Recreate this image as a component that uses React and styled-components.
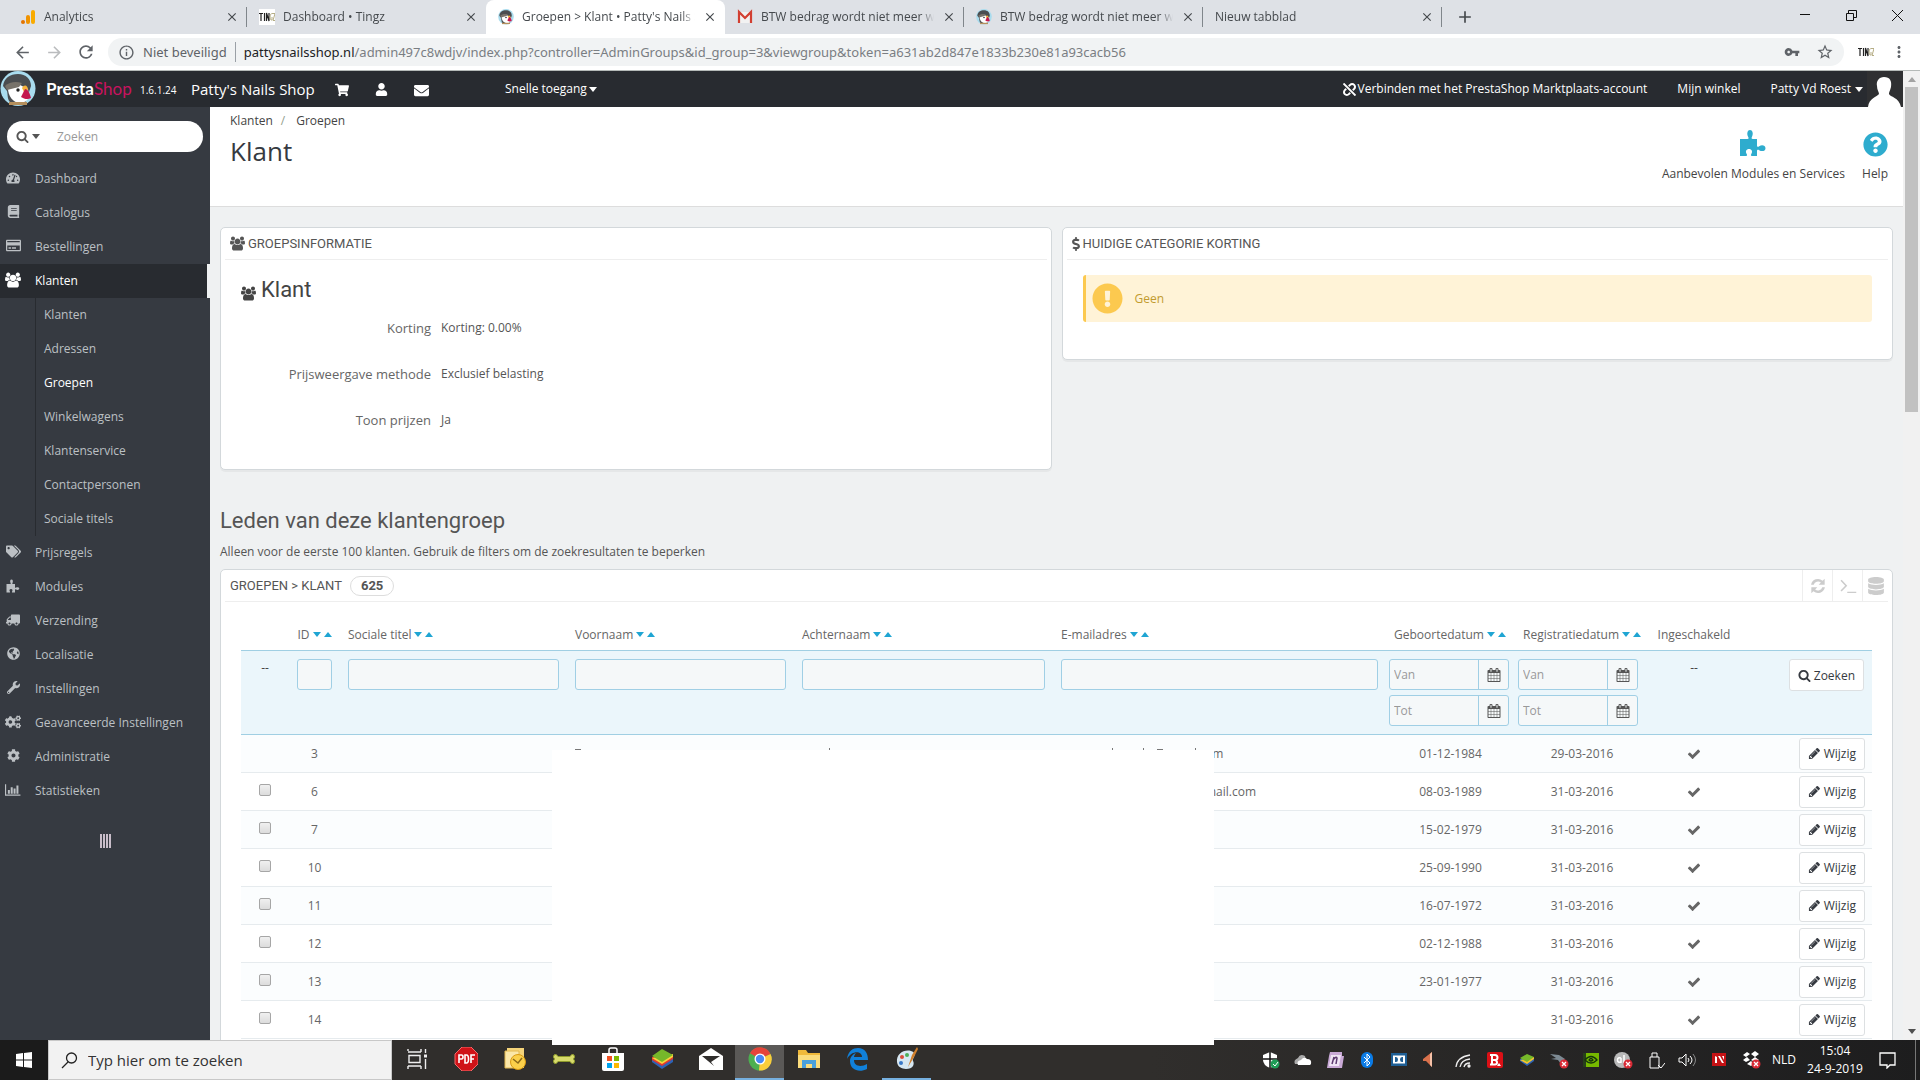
import React from 'react';
import styled, { createGlobalStyle, css } from 'styled-components';
import {
  FaTachometerAlt,
  FaBook,
  FaRegCreditCard,
  FaTags,
  FaTruck,
  FaGlobeAmericas,
  FaWrench,
  FaCogs,
  FaCog,
  FaShoppingCart,
  FaUser,
  FaEnvelope,
  FaDatabase,
  FaQuestionCircle,
  FaExclamationCircle,
  FaDollarSign,
  FaUnlink,
} from 'react-icons/fa';
import {
  MdArrowBack,
  MdArrowForward,
  MdRefresh,
  MdStarBorder,
  MdVpnKey,
  MdInfoOutline,
  MdMoreVert,
  MdAdd,
  MdClose,
} from 'react-icons/md';

const GlobalStyle = createGlobalStyle`
  * { box-sizing: border-box; }
  body {
    margin: 0;
    overflow: hidden;
    font-family: 'Open Sans', sans-serif;
    font-size: 12px;
    line-height: 18px;
    color: #555;
  }
  button, input { font-family: inherit; font-size: inherit; }
  a { color: inherit; text-decoration: none; }
  h1, h2, h3, p, ul { margin: 0; padding: 0; font-weight: 400; }
  ul { list-style: none; }
  svg { display: block; flex: none; }
`;

const headingFont = css`
  font-family: 'Ubuntu Condensed', Roboto, sans-serif;
`;

/* ---------- icons ---------- */

const glyphs = {
  users: ['0 0 1920 1792', 'M593 896q-162 5-265 128h-134q-82 0-138-40.5t-56-118.5q0-353 124-353 6 0 43.5 21t97.5 42.5 119 21.5q67 0 133-23-5 37-5 66 0 139 81 256zm1071 637q0 120-73 189.5t-194 69.5h-874q-121 0-194-69.5t-73-189.5q0-53 3.5-103.5t14-109 26.5-108.5 43-97.5 62-81 85.5-53.5 111.5-20q10 0 43 21.5t73 48 107 48 135 21.5 135-21.5 107-48 73-48 43-21.5q61 0 111.5 20t85.5 53.5 62 81 43 97.5 26.5 108.5 14 109 3.5 103.5zm-1024-1277q0 106-75 181t-181 75-181-75-75-181 75-181 181-75 181 75 75 181zm704 384q0 159-112.5 271.5t-271.5 112.5-271.5-112.5-112.5-271.5 112.5-271.5 271.5-112.5 271.5 112.5 112.5 271.5zm576 225q0 78-56 118.5t-138 40.5h-134q-103-123-265-128 81-117 81-256 0-29-5-66 66 23 133 23 59 0 119-21.5t97.5-42.5 43.5-21q124 0 124 353zm-128-609q0 106-75 181t-181 75-181-75-75-181 75-181 181-75 181 75 75 181z'],
  check: ['0 0 1792 1792', 'M1671 566q0 40-28 68l-724 724-136 136q-28 28-68 28t-68-28l-136-136-362-362q-28-28-28-68t28-68l136-136q28-28 68-28t68 28l294 295 656-657q28-28 68-28t68 28l136 136q28 28 28 68z'],
  search: ['0 0 1792 1792', 'M1216 832q0-185-131.5-316.5t-316.5-131.5-316.5 131.5-131.5 316.5 131.5 316.5 316.5 131.5 316.5-131.5 131.5-316.5zm512 832q0 52-38 90t-90 38q-54 0-90-38l-343-342q-179 124-399 124-143 0-273.5-55.5t-225-150-150-225-55.5-273.5 55.5-273.5 150-225 225-150 273.5-55.5 273.5 55.5 225 150 150 225 55.5 273.5q0 220-124 399l343 343q37 37 37 90z'],
  pencil: ['0 0 1792 1792', 'M491 1536l91-91-235-235-91 91v107h128v128h107zm523-928q0-22-22-22-10 0-17 7l-542 542q-7 7-7 17 0 22 22 22 10 0 17-7l542-542q7-7 7-17zm-54-192l416 416-832 832h-416v-416zm683 96q0 53-37 90l-166 166-416-416 166-165q36-38 90-38 53 0 91 38l235 234q37 39 37 91z'],
  calendar: ['0 0 1792 1792', 'M192 1664h288v-288h-288v288zm352 0h320v-288h-320v288zm-352-352h288v-320h-288v320zm352 0h320v-320h-320v320zm-352-384h288v-288h-288v288zm736 736h320v-288h-320v288zm-384-736h320v-288h-320v288zm768 736h288v-288h-288v288zm-384-352h320v-320h-320v320zm-352-864v-288q0-13-9.5-22.5t-22.5-9.5h-64q-13 0-22.5 9.5t-9.5 22.5v288q0 13 9.5 22.5t22.5 9.5h64q13 0 22.5-9.5t9.5-22.5zm736 864h288v-320h-288v320zm-384-384h320v-288h-320v288zm384 0h288v-288h-288v288zm32-480v-288q0-13-9.5-22.5t-22.5-9.5h-64q-13 0-22.5 9.5t-9.5 22.5v288q0 13 9.5 22.5t22.5 9.5h64q13 0 22.5-9.5t9.5-22.5zm384-64v1280q0 52-38 90t-90 38h-1408q-52 0-90-38t-38-90v-1280q0-52 38-90t90-38h128v-96q0-66 47-113t113-47h64q66 0 113 47t47 113v96h384v-96q0-66 47-113t113-47h64q66 0 113 47t47 113v96h128q52 0 90 38t38 90z'],
  puzzle: ['0 0 28 28', 'M1 10h7.500c1.500 0 1.200-1.200.6-2.200C7.500 4.500 8.500 1 11 1s3.700 3.500 2 6.800c-.6 1-.7 2.200.8 2.200H18v6.500c0 1.600 1.200 1.400 2.200.7 2.800-1.800 6.300-.8 6.300 2s-3.500 3.800-6.300 2c-1-.7-2.200-.7-2.200.8v5h-5c-1.300 0-1.300-1-.7-2 1.600-2.500.4-5-2.300-5s-3.900 2.500-2.300 5c.6 1 .6 2-.7 2H1z'],
  chart: ['0 0 28 24', 'M2 2v18h25v2H0V2zM5 12h3.500v6.500H5zM10 7h3.500v11.500H10zM15 9.500h3.500v9H15zM20 4h3.500v14.500H20z'],
  refresh: ['0 0 24 24', 'M22 1v9h-9l3.300-3.300A6.800 6.800 0 0 0 5.600 10H1.600A10.500 10.500 0 0 1 18.900 4.100zM2 23v-9h9l-3.300 3.300A6.800 6.800 0 0 0 18.400 14h4A10.500 10.500 0 0 1 5.100 19.900z'],
  terminal: ['0 0 24 24', 'M2 5l1.500-1.300 7.500 7.800-7.500 7.800L2 18l6.200-6.500zM11 19.500h12v1.800H11z'],
};

const Glyph = ({ name, size = 14 }) => (
  <svg width={size} height={size} viewBox={glyphs[name][0]} fill="currentColor" aria-hidden="true">
    <path d={glyphs[name][1]} />
  </svg>
);

const Dollar = styled(FaDollarSign)`
  width: 8px;
  height: 14px;
`;

const Caret = ({ up, size = 8 }) => (
  <svg width={size} height="5" viewBox="0 0 8 5" preserveAspectRatio="none" fill="currentColor" aria-hidden="true">
    <path d={up ? 'M0 5h8L4 0z' : 'M0 0h8L4 5z'} />
  </svg>
);

const Puffin = ({ size }) => (
  <svg width={size} height={size} viewBox="0 0 36 36" aria-hidden="true">
    <ellipse cx="18" cy="17.500" rx="17.500" ry="17.500" fill="#a9dcee" />
    <path d="M3 15C4 7 10 3 18 3s13 5 13 12l-2 6-4 11H11C7 29 8 24 7 20z" fill="#4a4d50" />
    <path d="M8 17c3-3 8-3 12-3l8 4 1 8c-2 4-5 6-9 6-7 0-12-7-12-15z" fill="#fff" />
    <path d="M5 15c4-4 11-5 17-3l-3 4-12 3z" fill="#77726a" />
    <circle cx="18" cy="19" r="1.700" fill="#222" />
    <path d="M22 17c2-4 6-3 6 2l-3 4z" fill="#f6b23c" />
    <path d="M25 18c3 0 5 5 6 9-3 2-7 1-10-1z" fill="#c4184f" />
    <path d="M9 31h18v3H9z" fill="#b58f5c" />
  </svg>
);

const AnalyticsIcon = () => (
  <svg width="16" height="16" viewBox="0 0 16 16" aria-hidden="true">
    <rect x="11" y="1" width="4" height="14" rx="2" fill="#f9ab00" />
    <rect x="6" y="6" width="4" height="9" rx="2" fill="#f09300" />
    <circle cx="3" cy="13" r="2" fill="#e37400" />
  </svg>
);

const TingzIcon = ({ plain }) => (
  <svg width="16" height="16" viewBox="0 0 16 16" aria-hidden="true">
    {!plain && <rect width="16" height="16" fill="#fff" />}
    <path d="M0 4.500h4M2 4v8M5.500 4v8M7.500 12V4l2.500 8V4" stroke="#222" strokeWidth="1.200" fill="none" />
    <path d="M13 5c-2-2-3 7 0 6V8M13 4.500h3l-2 7h2" stroke="#b5ad85" strokeWidth="1" fill="none" />
  </svg>
);

const GmailIcon = () => (
  <svg width="16" height="16" viewBox="0 0 16 16" aria-hidden="true">
    <path d="M2 3h12v11H2z" fill="#f2f2f2" />
    <path d="M2 14V3l6 6 6-6v11" stroke="#d23f31" strokeWidth="2.200" fill="none" />
  </svg>
);

/* ---------- browser ---------- */

const Screen = styled.div`
  position: relative;
  height: 100vh;
  display: flex;
  flex-direction: column;
  overflow: hidden;
  background: #eff1f2;
`;

const TabStrip = styled.div`
  flex: none;
  display: flex;
  height: 34px;
  padding-left: 8px;
  background: #dee1e6;
  font-size: 12px;
  color: #45494d;
`;

const Tab = styled.div`
  display: flex;
  align-items: center;
  width: 239px;
  gap: 8px;
  padding: 0 8px 0 12px;
  background: ${(p) => (p.$active ? '#fff' : 'transparent')};
  border-radius: 8px 8px 0 0;
`;

const TabTitle = styled.span`
  flex: 1;
  overflow: hidden;
  white-space: nowrap;
  mask-image: linear-gradient(to right, #000 92%, transparent);
`;

const TabEdge = styled.i`
  width: 1px;
  height: 20px;
  margin: 7px 0 7px -1px;
  background: ${(p) => (p.$hidden ? 'transparent' : '#80868b')};
`;

const PlainButton = styled.button`
  display: flex;
  align-items: center;
  justify-content: center;
  padding: 0;
  border: 0;
  background: none;
  color: inherit;
`;

const NewTab = styled(PlainButton)`
  width: 46px;
`;

const WindowButtons = styled.div`
  display: flex;
  align-items: center;
  height: 30px;
  margin-left: auto;
  color: #111;
`;

const WindowButton = styled(PlainButton)`
  width: 46px;
`;

const Toolbar = styled.div`
  flex: none;
  display: flex;
  align-items: center;
  height: 37px;
  padding: 0 12px;
  background: #fff;
  border-bottom: 1px solid #b5bab8;
  color: #5f6368;
`;

const NavButton = styled(PlainButton)`
  width: 32px;
  margin-left: ${(p) => (p.$first ? '-6px' : '0')};
  color: ${(p) => (p.$dim ? '#babcbe' : '#5f6368')};
`;

const AddressBar = styled.div`
  flex: 1;
  display: flex;
  align-items: center;
  gap: 8px;
  height: 28px;
  margin: 0 14px 0 6px;
  padding: 0 10px;
  border-radius: 14px;
  background: #f1f3f4;
  font-family: 'Noto Sans', sans-serif;
  font-size: 13px;
  line-height: 20px;
  white-space: nowrap;
`;

const UrlEdge = styled.i`
  width: 1px;
  height: 20px;
  background: #9aa0a6;
`;

const Url = styled.span`
  flex: 1;
  color: #7a7e83;
  b { font-weight: 400; color: #202124; }
`;

const UrlTools = styled.div`
  display: flex;
  align-items: center;
  gap: 16px;
`;

const ProfileTools = styled.div`
  display: flex;
  align-items: center;
  gap: 16px;
`;

/* ---------- back office ---------- */

const Viewport = styled.div`
  flex: 1;
  min-height: 0;
  display: flex;
`;

const Shop = styled.div`
  flex: 1;
  min-width: 0;
  display: flex;
  flex-direction: column;
  overflow: hidden;
`;

const TopBar = styled.header`
  flex: none;
  display: flex;
  align-items: center;
  height: 36px;
  background: #282b30;
  color: #fff;
  font-size: 12px;
  white-space: nowrap;
`;

const Brand = styled.a`
  display: flex;
  align-items: center;
  gap: 10px;
  width: 140px;
  font-family: 'Lato', sans-serif;
  font-size: 17px;
  font-weight: 700;
  em { font-style: normal; font-weight: 400; color: #c8135f; }
`;

const Version = styled.span`
  width: 51px;
  padding-top: 2px;
  font-size: 10px;
`;

const ShopName = styled.a`
  width: 144px;
  font-size: 15px;
`;

const TopIcons = styled.nav`
  display: flex;
  gap: 26px;
  width: 170px;
  padding-top: 2px;
`;

const TopLink = styled.a`
  display: flex;
  align-items: center;
  gap: 2px;
`;

const TopRight = styled.div`
  display: flex;
  align-items: center;
  gap: 30px;
  margin-left: auto;
`;

const Account = styled.a`
  display: flex;
  align-items: center;
  gap: 4px;
`;

const Columns = styled.div`
  flex: 1;
  min-height: 0;
  display: flex;
`;

const Sidebar = styled.aside`
  flex: none;
  width: 210px;
  padding-top: 14px;
  background: #363a41;
  color: #bcc0c4;
`;

const SideSearch = styled.form`
  display: flex;
  align-items: center;
  height: 31px;
  margin: 0 7px 10px;
  padding: 0 9px;
  gap: 3px;
  border-radius: 16px;
  background: #fff;
  color: #555;
  input {
    min-width: 0;
    flex: 1;
    margin-left: 14px;
    padding: 0;
    border: 0;
    outline: 0;
    background: none;
    &::placeholder { color: #999; }
  }
`;

const MenuLink = styled.a`
  display: grid;
  grid-template-columns: 28px 1fr;
  align-items: center;
  height: 34px;
  padding-left: 7px;
  color: ${(p) => (p.$active ? '#fff' : 'inherit')};
  background: ${(p) => (p.$active ? '#282b30' : 'none')};
  border-right: ${(p) => (p.$active ? '3px solid #eff1f2' : '0')};
`;

const MenuIcon = styled.span`
  display: flex;
  justify-content: center;
  width: 12px;
  padding-bottom: 3px;
  transform: ${(p) => (p.$flip ? 'scaleX(-1)' : 'none')};
`;

const SubMenu = styled.ul`
  margin-left: 35px;
  border-left: 1px solid #282b30;
`;

const SubLink = styled.a`
  display: flex;
  align-items: center;
  height: 34px;
  padding-left: 8px;
  color: ${(p) => (p.$active ? '#fff' : 'inherit')};
`;

const Collapse = styled(PlainButton)`
  gap: 1px;
  margin: 26px auto 0;
  i { width: 2px; height: 14px; background: #c9bdc9; }
`;

const Content = styled.main`
  flex: 1;
  min-width: 0;
  overflow: hidden;
`;

const PageHead = styled.div`
  display: flex;
  justify-content: space-between;
  height: 100px;
  padding: 5px 15px 0 20px;
  background: #fff;
  border-bottom: 1px solid #ddd;
`;

const Crumbs = styled.nav`
  display: flex;
  gap: 8px;
  color: #444;
  a + a::before { content: '/'; margin-right: 11px; color: #93a08c; }
`;

const PageTitle = styled.h1`
  margin-top: 3px;
  font-size: 26px;
  line-height: 36px;
  color: #363a41;
`;

const HeadTools = styled.div`
  display: flex;
  gap: 17px;
  padding-top: 18px;
`;

const HeadTool = styled.a`
  display: flex;
  flex-direction: column;
  align-items: center;
  justify-content: flex-end;
  gap: 8px;
  height: 53px;
  color: #444;
  svg { color: #2eacce; }
`;

const Sections = styled.div`
  padding: 20px 10px;
`;

const TopPanels = styled.div`
  display: grid;
  grid-template-columns: 1fr 1fr;
  gap: 10px;
  align-items: start;
`;

const Panel = styled.section`
  padding: 0 20px ${(p) => p.$bottom}px;
  border: 1px solid #d3d8db;
  border-radius: 5px;
  background: #fff;
  box-shadow: 0 2px 0 rgba(0, 0, 0, 0.04);
`;

const PanelHead = styled.div`
  display: flex;
  align-items: center;
  gap: 3px;
  height: 32px;
  margin: 0 -16px;
  padding-left: 5px;
  border-bottom: 1px solid #eee;
  ${headingFont}
  font-size: 13px;
  color: #555;
`;

const GroupName = styled.h3`
  display: flex;
  align-items: center;
  gap: 5px;
  height: 28px;
  margin: 16px 0 1px;
  ${headingFont}
  font-size: 22px;
  color: #444;
  svg { margin-top: 7px; }
`;

const InfoRow = styled.div`
  display: grid;
  grid-template-columns: 190px 1fr;
  align-items: center;
  gap: 10px;
  height: 46px;
  dt { text-align: right; font-size: 13px; color: #666; }
  dd { margin: 0; }
`;

const InfoList = styled.dl`
  margin: 0;
`;

const Warning = styled.div`
  display: flex;
  align-items: center;
  gap: 12px;
  height: 47px;
  margin-top: 15px;
  padding-left: 6px;
  border-left: 3px solid #fcc94f;
  border-radius: 3px;
  background: #fff3d7;
  color: #c29b2f;
  svg { color: #fcc94f; }
`;

const MembersTitle = styled.h2`
  margin: 36px 0 7px;
  ${headingFont}
  font-size: 22px;
  line-height: 30px;
  color: #555;
`;

const MembersNote = styled.p`
  margin-bottom: 8px;
`;

const Badge = styled.span`
  margin-left: 5px;
  padding: 0 10px;
  border: 1px solid #ddd;
  border-radius: 10px;
  font-weight: 700;
  line-height: 18px;
`;

const PanelActions = styled.div`
  display: flex;
  align-self: stretch;
  margin-left: auto;
`;

const PanelAction = styled(PlainButton)`
  width: 30px;
  border-left: 1px solid #eee;
  color: #ccc;
  &:last-child { width: 26px; }
`;

/* ---------- table ---------- */

const Table = styled.table`
  width: 100%;
  margin-top: 17px;
  table-layout: fixed;
  border-collapse: separate;
  border-spacing: 0;
  color: #666;
`;

const Head = styled.th`
  height: 31px;
  padding: 0 8px;
  font-weight: 400;
  text-align: ${(p) => p.$align || 'left'};
  white-space: nowrap;
`;

const Sort = styled.span`
  display: flex;
  align-items: center;
  justify-content: ${(p) => (p.$align === 'center' ? 'center' : 'flex-start')};
  gap: 3px;
  svg { color: #1fa5d3; }
`;

const FilterCell = styled.td`
  height: 85px;
  padding: 8px ${(p) => (p.$date ? 3 : 8)}px 0;
  vertical-align: top;
  text-align: ${(p) => p.$align || 'left'};
  background: #ebf6fb;
  border-top: 1px solid #a0cfe3;
  border-bottom: 1px solid #a0cfe3;
  color: #444;
`;

const fieldBox = css`
  height: 31px;
  border: 1px solid #a0cfe5;
  border-radius: 3px;
  background: #f5f8f9;
`;

const FilterInput = styled.input`
  ${fieldBox}
  display: block;
  width: 100%;
  padding: 0 8px;
`;

const DateField = styled.label`
  ${fieldBox}
  display: flex;
  width: 120px;
  margin-bottom: 5px;
  input {
    min-width: 0;
    flex: 1;
    padding: 0 4px;
    border: 0;
    border-right: 1px solid #a0cfe5;
    background: none;
    &::placeholder { color: #999; }
  }
`;

const DateIcon = styled.span`
  display: flex;
  align-items: center;
  justify-content: center;
  width: 29px;
  color: #555;
`;

const Button = styled.button`
  display: inline-flex;
  align-items: center;
  gap: 3px;
  height: 32px;
  padding: 0 8px;
  border: 1px solid #dde0e2;
  border-radius: 3px;
  background: #fff;
  color: #363a41;
  vertical-align: middle;
`;

const Row = styled.tr`
  background: ${(p) => (p.$odd ? '#fbfdfe' : '#fff')};
`;

const Cell = styled.td`
  height: 38px;
  padding: 0 ${(p) => (p.$tail ? 7 : 8)}px;
  border-bottom: 1px solid #e6ebee;
  text-align: ${(p) => p.$align || 'left'};
  svg { margin: 0 auto; }
`;

const EmailCell = styled(Cell)`
  padding-left: 152px;
`;

const Check = styled.input`
  appearance: none;
  display: block;
  width: 12px;
  height: 12px;
  margin: 0 auto 4px;
  border: 1px solid #a6a6a6;
  border-radius: 2px;
  background: linear-gradient(#f0f0f0, #dcdcdc);
`;

/* white patch over the private columns */
const Redaction = styled.div`
  position: absolute;
  z-index: 2;
  left: 552px;
  top: 750px;
  width: 662px;
  height: 295px;
  background: #fff;
`;

const Leftovers = styled.svg`
  position: absolute;
  left: 0;
  top: -2px;
`;

const ScrollTrack = styled.div`
  flex: none;
  display: flex;
  flex-direction: column;
  align-items: center;
  justify-content: space-between;
  width: 17px;
  padding: 6px 0;
  background: #f1f1f1;
  color: #505050;
  svg:first-child { color: #a3a3a3; }
`;

const ScrollThumb = styled.i`
  width: 13px;
  height: 325px;
  margin: 5px 0 auto;
  background: #c1c1c1;
`;

/* ---------- taskbar ---------- */

const Taskbar = styled.footer`
  flex: none;
  display: flex;
  height: 40px;
  background: linear-gradient(to right, #302e2c 60%, #1d1d1e);
  color: #fff;
`;

const StartButton = styled(PlainButton)`
  width: 48px;
  background: #1b1b1b;
`;

const TaskSearch = styled.label`
  display: flex;
  align-items: center;
  gap: 10px;
  width: 344px;
  padding-left: 12px;
  border: 1px solid #c8c8c8;
  background: #f2f2f2;
  color: #222;
  input {
    flex: 1;
    padding: 0;
    border: 0;
    background: none;
    font-size: 15px;
    &::placeholder { color: #333; }
  }
`;

const TaskApp = styled(PlainButton)`
  width: 49px;
  border-bottom: 2px solid ${(p) => (p.$open ? '#76b0e0' : 'transparent')};
  background: ${(p) => (p.$active ? '#5b5957' : 'none')};
`;

const Tray = styled.div`
  display: flex;
  align-items: center;
  margin-left: auto;
`;

const TrayButton = styled(PlainButton)`
  width: 32px;
  height: 40px;
`;

const Language = styled.span`
  width: 34px;
  text-align: center;
`;

const Clock = styled.time`
  width: 68px;
  text-align: center;
  line-height: 18px;
`;

const Notice = styled(PlainButton)`
  width: 37px;
  height: 40px;
`;

const ShowDesktop = styled.i`
  width: 5px;
  height: 40px;
  margin-left: 9px;
  border-left: 1px solid #777;
`;

const apps = [
  { name: 'Taakweergave', art: <g fill="none" stroke="#eee" strokeWidth="1.400"><path d="M3 5h13M3 4V2M16 2v3M3 19v3M16 19v3M3 19h13M4 8.500h11v7H4zM20.500 2v4M20.500 12v10" /><path d="M19 9h3" strokeWidth="3" /></g> },
  { name: 'PDF', art: <g><path d="M8 0h9l7 7v10l-7 7H8l-7-7V7z" fill="#cf1318" stroke="#f26a6a" /><path d="M5 16V8h2.500q1.500 0 1.500 2t-1.500 2H5M11 8v8h1.500q2 0 2-4t-2-4zM17 16V8h4M17 12h3" stroke="#fff" strokeWidth="1.600" fill="none" /></g> },
  { name: 'Outlook', art: <g><path d="M4 1h17v20H4z" fill="#f5d47a" /><path d="M2 4h14v17H2z" fill="#fbe7a8" stroke="#e3b94e" /><circle cx="15" cy="15" r="7.500" fill="#fbd04a" stroke="#d99a12" /><path d="M10 12l5 4 4-5" stroke="#8c6a1a" strokeWidth="1.500" fill="none" /></g> },
  { name: 'Bot', art: <path d="M2 8q2-2 4 1.500h12q2-3.500 4-1.500 1.500 2-.5 4 2 2 .5 4-2 2-4-1.500H6q-2 3.500-4 1.500-1.500-2 .5-4-2-2-.5-4z" fill="#d8db6b" stroke="#8f9a2c" /> },
  { name: 'Store', art: <g><path d="M8 6V3q0-2 2-2h4q2 0 2 2v3" stroke="#fff" strokeWidth="1.500" fill="none" /><path d="M1 6h22v16q0 2-2 2H3q-2 0-2-2z" fill="#fff" /><path d="M6 9h5v5H6z" fill="#f25022" /><path d="M13 9h5v5h-5z" fill="#7fba00" /><path d="M6 16h5v5H6z" fill="#00a4ef" /><path d="M13 16h5v5h-5z" fill="#ffb900" /></g> },
  { name: 'BlueStacks', art: <g><path d="M2 15l10 7 11-7v-4L2 12z" fill="#2d62b5" /><path d="M2 13l10 6 11-7V9L2 10z" fill="#e23a2e" /><path d="M2 11l10 6 11-7V7z" fill="#f8d33a" /><path d="M2 9l10-7 11 6-11 7z" fill="#76b82a" /></g> },
  { name: 'Mail', art: <g><path d="M0 9l12-8 12 8v14H0z" fill="#fff" /><path d="M3 9h18l-9 6 3 4-6-5z" fill="#302e2c" /></g> },
  { name: 'Chrome', active: true, open: true, art: <g><circle cx="12" cy="12" r="11.500" fill="#4caf50" /><path d="M12 12L2 6.300A11.500 11.500 0 0 1 22.500 7z" fill="#e5443a" /><path d="M12 12l10.500-5A11.500 11.500 0 0 1 11 23.500z" fill="#fccd3c" /><circle cx="12" cy="12" r="5.500" fill="#fff" /><circle cx="12" cy="12" r="4.200" fill="#4a8af4" /></g> },
  { name: 'Verkenner', art: <g><path d="M1 3h8l2 3h12v15H1z" fill="#f0b93a" /><path d="M1 8h22v13H1z" fill="#fbdc7c" /><path d="M5 21v-8h14v8h-4v-4H9v4z" fill="#4aa0dc" /></g> },
  { name: 'Edge', art: <path d="M1 12C2 4 7 1 12 1c7 0 10 5 10 12H8c0 7 8 7 13 4v5c-8 4-17 1-17-8 0-4 3-7 6-8-1 1-2 3-2 4h8c0-6-10-7-15 2z" fill="#1181da" /> },
  { name: 'Paint', open: true, art: <g><path d="M2 15C1 7 9 2 16 4c6 2 3 6 2 8s2 3 0 7-15 5-16-4z" fill="#d6e7f2" /><circle cx="7" cy="10" r="2" fill="#d94c3a" /><circle cx="12" cy="8" r="2" fill="#4cae5a" /><circle cx="6" cy="16" r="2" fill="#3878c8" /><path d="M22 0l-5 8-4 12 6-10 4-8z" fill="#cf7f2c" /></g> },
];

const redCross = <g><circle cx="15" cy="14" r="4.500" fill="#d92a35" /><path d="M13 12l4 4M17 12l-4 4" stroke="#fff" strokeWidth="1.300" /></g>;

const tray = [
  { name: 'Beveiliging', art: <g><path d="M9 2l7 3v5q0 5-7 8-7-3-7-8V5z" fill="#fff" /><path d="M9 2v16M2 9h14" stroke="#111" strokeWidth="1.500" /><circle cx="14" cy="14" r="4.500" fill="#1f9d57" /><path d="M12 14l2 2 3-4" stroke="#fff" fill="none" /></g> },
  { name: 'OneDrive', art: <g><path d="M2 14q-2-4 3-6 2-5 7-2l2 8z" fill="#aaa" /><path d="M5 15q-2-4 3-5 3-4 6-1 5 0 4 5l-1 1z" fill="#fff" /></g> },
  { name: 'Notities', art: <g><path d="M5 2h12v4h2l-2 12H2L4 6z" fill="#c9a9d6" /><path d="M6 5h10l-2 11H4z" fill="#efe4f4" /><path d="M7 14l2-7M8 10q3-4 4-2l-1 6" stroke="#5d3a70" strokeWidth="1.500" fill="none" /></g> },
  { name: 'Bluetooth', art: <g><rect x="4" y="2" width="12" height="16" rx="6" fill="#0a7be6" /><path d="M7 7l6 6-3 3V4l3 3-6 6" stroke="#fff" fill="none" /></g> },
  { name: 'Grafisch', art: <g><path d="M2 3h16v13H2z" fill="#1f5f95" /><path d="M4 5.500h12v8H4z" fill="#fff" /><path d="M6 7h1q2 0 2 2.500T7 12H6zM14 7h-1q-2 0-2 2.500t2 2.500h1z" fill="#1f5f95" /></g> },
  { name: 'Audio', art: <g><path d="M2 9l9-7v15l-6-6H2z" fill="#d9714c" /><path d="M9 4l2-2v15l-2-2z" fill="#f5c1a8" /></g> },
  { name: 'Netwerk', art: <g fill="none" stroke="#eee" strokeWidth="1.300"><path d="M3 17Q4 7 17 5M7 17q1-7 10-8M11 17q1-4 6-4" /><circle cx="16" cy="16" r="1" fill="#fff" /></g> },
  { name: 'Bitdefender', art: <g><rect x="2" y="2" width="16" height="16" rx="2" fill="#dc1016" /><path d="M5 5h5q2.500 0 2.500 2.500T10 10H7M7 5v10M5 14.500h5q2 0 2-2T10 10" stroke="#fff" strokeWidth="2" fill="none" /><path d="M12 16l2-3 2 3z" fill="#fff" /></g> },
  { name: 'BlueStacks', art: <g><path d="M3 11l7 5 7-5v-2H3z" fill="#2d62b5" /><path d="M3 10l7 4 7-5V7z" fill="#f3c12f" /><path d="M3 8l7-4 7 3-7 5z" fill="#76b82a" /></g> },
  { name: 'Hardware', art: <g><path d="M1 4l9 1 6 4-4 5-3-4-7-1 5-1z" fill="#7d8a93" />{redCross}</g> },
  { name: 'Nvidia', art: <g><path d="M2 3h16v14H2z" fill="#76b900" /><path d="M2 3h3v14H2z" fill="#27401a" /><path d="M4 10q6-7 12 0-6 6-12 0zm4 0q2-3 4 0-2 2-4 0z" fill="none" stroke="#16350c" strokeWidth="1.300" /></g> },
  { name: 'Taal', art: <g><circle cx="9" cy="10" r="8" fill="#b9b9b9" /><path d="M8 8q-3.500-1-3.500 2T8 12V8v5M11 5v8" stroke="#fff" strokeWidth="1.500" fill="none" />{redCross}</g> },
  { name: 'USB', art: <g fill="none" stroke="#fff"><path d="M5 7h9v11H5zM7 7V3h5v4M13 15l3 3 4-5" /></g> },
  { name: 'Volume', art: <g fill="none" stroke="#fff"><path d="M2 8h3l4-4v12l-4-4H2zM11 8q2 2 0 4M13 6q4 4 0 8" /><path d="M16 4q5 6 0 12" stroke="#888" /></g> },
  { name: 'Adobe', art: <g><path d="M3 3h14v13H3z" fill="#c41215" /><path d="M6 13V6l2 1v6zM9 6h2l4 7h-2zM13 6h2v4z" fill="#fff" /></g> },
  { name: 'Dropbox', art: <g><path d="M2 5l4-3 3 2-4 3zM10 4l4-3 4 3-4 3zM2 10l4-3 3 3-4 2zM10 10l4-3 4 3-4 2zM6 14l4-3 3 3-3 2z" fill="#fff" />{redCross}</g> },
];

/* ---------- data ---------- */

const tabs = [
  { title: 'Analytics', icon: <AnalyticsIcon /> },
  { title: 'Dashboard • Tingz', icon: <TingzIcon />, noEdge: true },
  { title: "Groepen > Klant • Patty's Nails Sh", icon: <Puffin size={16} />, active: true, noEdge: true },
  { title: 'BTW bedrag wordt niet meer wee', icon: <GmailIcon /> },
  { title: 'BTW bedrag wordt niet meer wee', icon: <Puffin size={16} /> },
  { title: 'Nieuw tabblad' },
];

const menuTop = [
  { label: 'Dashboard', icon: <FaTachometerAlt size={14} /> },
  { label: 'Catalogus', icon: <FaBook size={13} /> },
  { label: 'Bestellingen', icon: <FaRegCreditCard size={15} /> },
  { label: 'Klanten', icon: <Glyph name="users" size={16} />, active: true },
];

const subMenu = ['Klanten', 'Adressen', 'Groepen', 'Winkelwagens', 'Klantenservice', 'Contactpersonen', 'Sociale titels'];

const menuBottom = [
  { label: 'Prijsregels', icon: <FaTags size={15} /> },
  { label: 'Modules', icon: <Glyph name="puzzle" /> },
  { label: 'Verzending', icon: <FaTruck size={14} />, flip: true },
  { label: 'Localisatie', icon: <FaGlobeAmericas size={13} /> },
  { label: 'Instellingen', icon: <FaWrench size={13} /> },
  { label: 'Geavanceerde Instellingen', icon: <FaCogs size={16} /> },
  { label: 'Administratie', icon: <FaCog size={13} /> },
  { label: 'Statistieken', icon: <Glyph name="chart" size={16} /> },
];

const columns = [
  { width: 48 },
  { label: 'ID', width: 51, sort: true, align: 'center' },
  { label: 'Sociale titel', width: 227, sort: true, filter: true },
  { label: 'Voornaam', width: 227, sort: true, filter: true },
  { label: 'Achternaam', width: 259, sort: true, filter: true },
  { label: 'E-mailadres', width: 333, sort: true, filter: true },
  { label: 'Geboortedatum', width: 129, sort: true },
  { label: 'Registratiedatum', width: 134, sort: true },
  { label: 'Ingeschakeld', width: 90, align: 'center' },
  { width: 133 },
];

const members = [
  { id: 3, email: 'om', born: '01-12-1984', joined: '29-03-2016', locked: true },
  { id: 6, email: 'mail.com', born: '08-03-1989', joined: '31-03-2016' },
  { id: 7, born: '15-02-1979', joined: '31-03-2016' },
  { id: 10, born: '25-09-1990', joined: '31-03-2016' },
  { id: 11, born: '16-07-1972', joined: '31-03-2016' },
  { id: 12, born: '02-12-1988', joined: '31-03-2016' },
  { id: 13, born: '23-01-1977', joined: '31-03-2016' },
  { id: 14, joined: '31-03-2016' },
];

const MenuItem = ({ item }) => (
  <li>
    <MenuLink href="#" $active={item.active}>
      <MenuIcon $flip={item.flip}>{item.icon}</MenuIcon>
      {item.label}
    </MenuLink>
  </li>
);

const DateFilter = ({ name }) => (
  <FilterCell $date>
    {['Van', 'Tot'].map((edge) => (
      <DateField key={edge}>
        <input type="text" placeholder={edge} aria-label={`${name} ${edge}`} />
        <DateIcon><Glyph name="calendar" /></DateIcon>
      </DateField>
    ))}
  </FilterCell>
);

const Browser = () => (
  <>
    <TabStrip>
      {tabs.map((tab, i) => (
        <React.Fragment key={i}>
          <Tab $active={tab.active}>
            {tab.icon}
            <TabTitle>{tab.title}</TabTitle>
            <PlainButton aria-label="Sluiten"><MdClose size={14} /></PlainButton>
          </Tab>
          <TabEdge $hidden={tab.noEdge} />
        </React.Fragment>
      ))}
      <NewTab aria-label="Nieuw tabblad"><MdAdd size={20} /></NewTab>
      <WindowButtons>
        <WindowButton aria-label="Minimaliseren">
          <svg width="10" height="10" stroke="currentColor"><path d="M0 4.500h10" /></svg>
        </WindowButton>
        <WindowButton aria-label="Verkleinen">
          <svg width="11" height="11" stroke="currentColor" fill="none"><path d="M.5 3.500h7v7h-7zM2.500 3V.5h8v7H8" /></svg>
        </WindowButton>
        <WindowButton aria-label="Venster sluiten">
          <svg width="11" height="11" stroke="currentColor"><path d="M0 0l11 11M11 0L0 11" /></svg>
        </WindowButton>
      </WindowButtons>
    </TabStrip>
    <Toolbar>
      <NavButton $first aria-label="Vorige"><MdArrowBack size={19} /></NavButton>
      <NavButton $dim aria-label="Volgende"><MdArrowForward size={19} /></NavButton>
      <NavButton aria-label="Vernieuwen"><MdRefresh size={20} /></NavButton>
      <AddressBar>
        <MdInfoOutline size={17} />
        <span>Niet beveiligd</span>
        <UrlEdge />
        <Url><b>pattysnailsshop.nl</b>/admin497c8wdjv/index.php?controller=AdminGroups&amp;id_group=3&amp;viewgroup&amp;token=a631ab2d847e1833b230e81a93cacb56</Url>
        <UrlTools>
          <MdVpnKey size={16} />
          <MdStarBorder size={18} />
        </UrlTools>
      </AddressBar>
      <ProfileTools>
        <TingzIcon plain />
        <MdMoreVert size={18} />
      </ProfileTools>
    </Toolbar>
  </>
);

const MembersTable = () => (
  <Table>
    <colgroup>
      {columns.map((c, i) => <col key={i} width={c.width} />)}
    </colgroup>
    <thead>
      <tr>
        {columns.map((c, i) => (
          <Head key={i} $align={c.align}>
            {c.sort ? (
              <Sort $align={c.align}>{c.label} <Caret /> <Caret up /></Sort>
            ) : c.label}
          </Head>
        ))}
      </tr>
    </thead>
    <tbody>
      <tr>
        <FilterCell $align="center">--</FilterCell>
        <FilterCell><FilterInput aria-label="ID" /></FilterCell>
        {columns.filter((c) => c.filter).map((c) => (
          <FilterCell key={c.label}><FilterInput aria-label={c.label} /></FilterCell>
        ))}
        <DateFilter name="Geboortedatum" />
        <DateFilter name="Registratiedatum" />
        <FilterCell $align="center">--</FilterCell>
        <FilterCell $align="right">
          <Button><Glyph name="search" size={13} />Zoeken</Button>
        </FilterCell>
      </tr>
      {members.map((m, i) => (
        <Row key={m.id} $odd={i % 2 === 0}>
          <Cell>{!m.locked && <Check type="checkbox" aria-label={`Klant ${m.id}`} />}</Cell>
          <Cell $align="center">{m.id}</Cell>
          <Cell />
          <Cell />
          <Cell />
          <EmailCell>{m.email}</EmailCell>
          <Cell $align="center">{m.born}</Cell>
          <Cell $align="center">{m.joined}</Cell>
          <Cell $align="center"><Glyph name="check" /></Cell>
          <Cell $align="right" $tail>
            <Button><Glyph name="pencil" size={13} />Wijzig</Button>
          </Cell>
        </Row>
      ))}
    </tbody>
  </Table>
);

const App = () => (
  <Screen>
    <GlobalStyle />
    <Browser />
    <Viewport>
      <Shop>
        <TopBar>
          <Brand href="#"><Puffin size={36} /><span>Presta<em>Shop</em></span></Brand>
          <Version>1.6.1.24</Version>
          <ShopName href="#">Patty's Nails Shop</ShopName>
          <TopIcons>
            <a href="#" aria-label="Bestellingen"><FaShoppingCart size={14} /></a>
            <a href="#" aria-label="Klanten"><FaUser size={13} /></a>
            <a href="#" aria-label="Berichten"><FaEnvelope size={15} /></a>
          </TopIcons>
          <TopLink href="#">Snelle toegang <Caret /></TopLink>
          <TopRight>
            <TopLink href="#"><FaUnlink size={13} /> Verbinden met het PrestaShop Marktplaats-account</TopLink>
            <TopLink href="#">Mijn winkel</TopLink>
            <Account href="#">
              Patty Vd Roest <Caret />
              <svg width="36" height="36" viewBox="0 0 36 36" aria-hidden="true">
                <path d="M0 0h36v36H0z" fill="#2f3032" />
                <path d="M17 6c6 0 8 4 7 10-1 4-2 5-2 7 1 3 10 3 12 13H1c1-9 9-10 11-13 0-2-2-4-2-8-1-5 2-9 7-9z" fill="#fff" />
              </svg>
            </Account>
          </TopRight>
        </TopBar>
        <Columns>
          <Sidebar>
            <SideSearch>
              <Glyph name="search" size={13} />
              <Caret />
              <input type="text" placeholder="Zoeken" aria-label="Zoeken" />
            </SideSearch>
            <ul>{menuTop.map((item) => <MenuItem key={item.label} item={item} />)}</ul>
            <SubMenu>
              {subMenu.map((label) => (
                <li key={label}><SubLink href="#" $active={label === 'Groepen'}>{label}</SubLink></li>
              ))}
            </SubMenu>
            <ul>{menuBottom.map((item) => <MenuItem key={item.label} item={item} />)}</ul>
            <Collapse aria-label="Menu inklappen"><i /><i /><i /><i /></Collapse>
          </Sidebar>
          <Content>
            <PageHead>
              <div>
                <Crumbs><a href="#">Klanten</a><a href="#">Groepen</a></Crumbs>
                <PageTitle>Klant</PageTitle>
              </div>
              <HeadTools>
                <HeadTool href="#"><Glyph name="puzzle" size={28} />Aanbevolen Modules en Services</HeadTool>
                <HeadTool href="#"><FaQuestionCircle size={25} />Help</HeadTool>
              </HeadTools>
            </PageHead>
            <Sections>
              <TopPanels>
                <Panel $bottom={26}>
                  <PanelHead><Glyph name="users" size={15} />GROEPSINFORMATIE</PanelHead>
                  <GroupName><Glyph name="users" size={15} />Klant</GroupName>
                  <InfoList>
                    <InfoRow><dt>Korting</dt><dd>Korting: 0.00%</dd></InfoRow>
                    <InfoRow><dt>Prijsweergave methode</dt><dd>Exclusief belasting</dd></InfoRow>
                    <InfoRow><dt>Toon prijzen</dt><dd>Ja</dd></InfoRow>
                  </InfoList>
                </Panel>
                <Panel $bottom={37}>
                  <PanelHead><Dollar />HUIDIGE CATEGORIE KORTING</PanelHead>
                  <Warning><FaExclamationCircle size={31} />Geen</Warning>
                </Panel>
              </TopPanels>
              <MembersTitle>Leden van deze klantengroep</MembersTitle>
              <MembersNote>Alleen voor de eerste 100 klanten. Gebruik de filters om de zoekresultaten te beperken</MembersNote>
              <Panel $bottom={20}>
                <PanelHead>
                  GROEPEN &gt; KLANT <Badge>625</Badge>
                  <PanelActions>
                    <PanelAction aria-label="Vernieuwen"><Glyph name="refresh" size={16} /></PanelAction>
                    <PanelAction aria-label="SQL tonen"><Glyph name="terminal" size={18} /></PanelAction>
                    <PanelAction aria-label="SQL exporteren"><FaDatabase size={18} /></PanelAction>
                  </PanelActions>
                </PanelHead>
                <MembersTable />
              </Panel>
            </Sections>
          </Content>
        </Columns>
      </Shop>
      <ScrollTrack>
        <Caret up />
        <ScrollThumb />
        <Caret />
      </ScrollTrack>
    </Viewport>
    <Taskbar>
      <StartButton aria-label="Start">
        <svg width="16" height="16" viewBox="0 0 16 16" fill="#fff"><path d="M0 2l7-1v6.500H0zM8 1l8-1v7.500H8zM0 8.500h7V15l-7-1zM8 8.500h8V16l-8-1z" /></svg>
      </StartButton>
      <TaskSearch>
        <svg width="17" height="17" viewBox="0 0 17 17" fill="none" stroke="#222" strokeWidth="1.300"><circle cx="10.500" cy="6" r="5" /><path d="M7 10l-6 6" /></svg>
        <input type="text" placeholder="Typ hier om te zoeken" aria-label="Typ hier om te zoeken" />
      </TaskSearch>
      {apps.map((app) => (
        <TaskApp key={app.name} aria-label={app.name} $open={app.open} $active={app.active}>
          <svg width="24" height="24" viewBox="0 0 24 24">{app.art}</svg>
        </TaskApp>
      ))}
      <Tray>
        {tray.map((t, i) => (
          <TrayButton key={i} aria-label={t.name}>
            <svg width="20" height="20" viewBox="0 0 20 20">{t.art}</svg>
          </TrayButton>
        ))}
        <Language>NLD</Language>
        <Clock>15:04<br />24-9-2019</Clock>
        <Notice aria-label="Meldingen">
          <svg width="18" height="18" viewBox="0 0 18 18" fill="none" stroke="#fff" strokeWidth="1.300"><path d="M1 2h15v12h-5l-3 3v-3H1z" /></svg>
        </Notice>
        <ShowDesktop />
      </Tray>
    </Taskbar>
    <Redaction>
      <Leftovers width="662" height="2" fill="#777" aria-hidden="true">
        <path d="M23 1h6v1h-6zM277 0h1v2h-1zM560 0h1v2h-1zM591 0h1v2h-1zM605 1h6v1h-6zM643 0h1v2h-1z" />
      </Leftovers>
    </Redaction>
  </Screen>
);

export default App;
